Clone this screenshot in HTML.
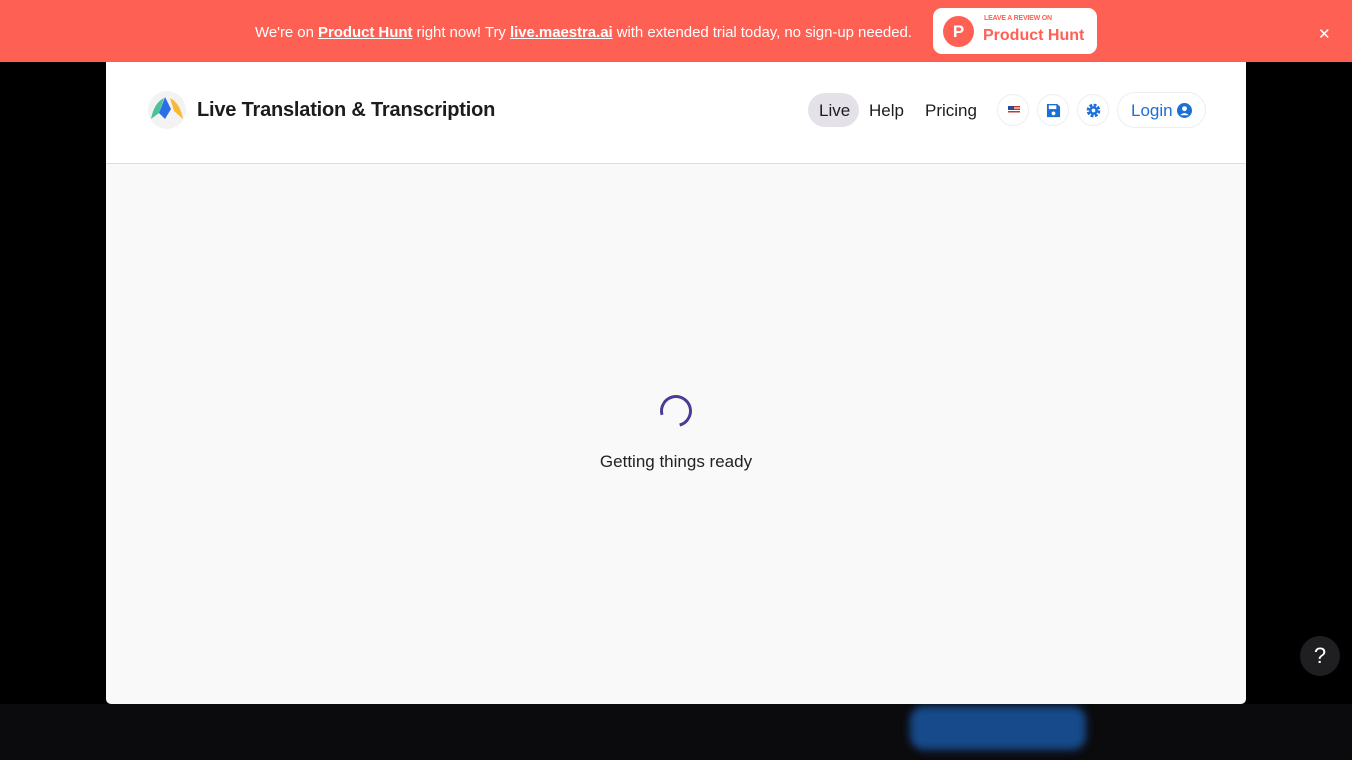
<!DOCTYPE html>
<html><head><meta charset="utf-8"><style>
*{margin:0;padding:0;box-sizing:border-box}
body{width:1352px;height:760px;background:#000;font-family:"Liberation Sans",sans-serif;position:relative;overflow:hidden}
.banner{position:absolute;left:0;top:0;width:1352px;height:62px;background:#fe6154;color:#fff;font-size:15px;box-shadow:0 2px 4px rgba(0,0,0,.15)}
.banner .txt{position:absolute;left:255px;top:24px;letter-spacing:-0.05px;white-space:nowrap}
.banner u{font-weight:bold}
.ph{position:absolute;left:933px;top:8px;width:164px;height:46px;background:#fff;border-radius:9px}
.ph .c{position:absolute;left:10px;top:8px;width:31px;height:31px;border-radius:50%;background:#fe6154;color:#fff;font-weight:bold;font-size:17px;text-align:center;line-height:31px}
.ph .s{position:absolute;left:51px;top:7px;font-size:7px;color:#fe6154;font-weight:bold;letter-spacing:-0.2px}
.ph .b{position:absolute;left:50px;top:19px;font-size:16px;color:#fe6154;font-weight:bold}
.x{position:absolute;left:1318px;top:25px;font-size:15px;color:#fff}
.card{position:absolute;left:106px;top:62px;width:1140px;height:642px;background:#f9f9fa;border-radius:0 0 5px 5px;overflow:hidden}
.hdr{height:102px;background:#fff;border-bottom:1px solid #ddd;position:relative}
.title{position:absolute;left:91px;top:37px;font-size:20px;font-weight:bold;color:#1c1c1c;letter-spacing:-0.2px}
.nav{position:absolute;top:48px;font-size:17px;color:#1c1c1c}
.live{position:absolute;left:702px;top:31px;width:51px;height:34px;background:#e4e2e8;border-radius:17px}
.ic{position:absolute;top:32px;width:32px;height:32px;border-radius:50%;border:1px solid #eee;background:#fff}
.login{position:absolute;left:1011px;top:30px;width:89px;height:36px;border:1px solid #eee;border-radius:18px;color:#1a6fd8;font-size:17px;padding:8px 0 0 13px}
.spin{position:absolute;left:554px;top:333px;width:32px;height:32px;border-radius:50%;border:3.5px solid #4d3a96;border-bottom-color:transparent;transform:rotate(30deg)}
.ready{position:absolute;left:0;width:1140px;top:390px;text-align:center;font-size:17px;color:#222}
.help{position:absolute;left:1300px;top:636px;width:40px;height:40px;border-radius:50%;background:#1f1f22;color:#fff;text-align:center;line-height:40px;font-size:22px}
.bot{position:absolute;left:0;top:704px;width:1352px;height:56px;background:#0b0b0e}
.blue{position:absolute;left:910px;top:706px;width:176px;height:44px;background:#164a8a;border-radius:14px;filter:blur(4px)}
</style></head><body>
<div class="bot"></div><div class="blue"></div>
<div class="banner"><div class="txt">We're on <u>Product Hunt</u> right now! Try <u>live.maestra.ai</u> with extended trial today, no sign-up needed.</div>
<div class="ph"><div class="c">P</div><div class="s">LEAVE A REVIEW ON</div><div class="b">Product Hunt</div></div>
<div class="x">✕</div></div>
<div class="card"><div class="hdr">
<svg style="position:absolute;left:42px;top:29px" width="38" height="38" viewBox="0 0 38 38"><circle cx="19" cy="19" r="19" fill="#f3f3f3"/><path d="M3 28 Q6 12 16 7 L11 22Z" fill="#4bc29a"/><path d="M22 7 Q32 12 35 28 L26 20Z" fill="#f9b938"/><path d="M11 22 L17 6 L23 18 L17 28Z" fill="#2b6fe8"/></svg>
<div class="title">Live Translation &amp; Transcription</div>
<div class="live"></div>
<div class="nav" style="left:713px;top:39px">Live</div>
<div class="nav" style="left:763px;top:39px">Help</div>
<div class="nav" style="left:819px;top:39px">Pricing</div>
<div class="ic" style="left:891px"><div style="position:absolute;left:10px;top:11px;width:12px;height:8px;background:repeating-linear-gradient(#c33 0 1.3px,#fff 1.3px 2.6px)"><div style="width:6px;height:4px;background:#2a4a9a"></div></div></div>
<div class="ic" style="left:931px"><svg style="position:absolute;left:8px;top:8px" width="15" height="15" viewBox="0 0 16 16"><path d="M1 1h11l3 3v11H1z" fill="#1a6fd8"/><rect x="3" y="2.5" width="8" height="4" fill="#fff"/><circle cx="8" cy="11" r="2" fill="#fff"/></svg></div>
<div class="ic" style="left:971px"><svg style="position:absolute;left:8px;top:8px" width="15" height="15" viewBox="0 0 16 16"><circle cx="8" cy="8" r="5.8" fill="none" stroke="#1a6fd8" stroke-width="3" stroke-dasharray="3 1.55"/><circle cx="8" cy="8" r="4.6" fill="#1a6fd8"/><circle cx="8" cy="8" r="2" fill="#fff"/></svg></div>
<div class="login">Login <svg style="vertical-align:-2px" width="15" height="15" viewBox="0 0 16 16"><circle cx="8" cy="8" r="8" fill="#1a6fd8"/><circle cx="8" cy="6" r="2.6" fill="#fff"/><path d="M3.5 13 Q8 8.5 12.5 13" fill="#fff"/></svg></div>
</div>
<div class="spin"></div>
<div class="ready">Getting things ready</div>
</div>
<div class="help">?</div>
</body></html>
